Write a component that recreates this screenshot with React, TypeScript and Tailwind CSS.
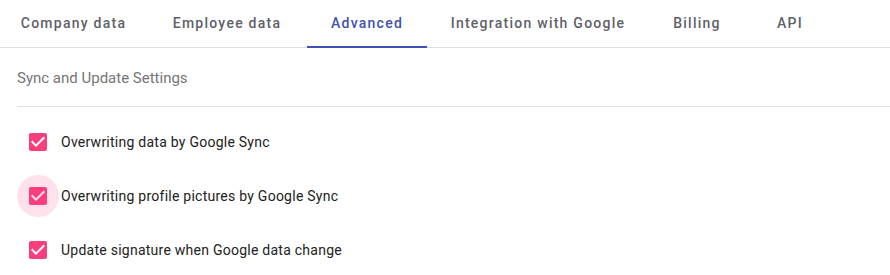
import React from 'react';

const tabs = [
  { label: 'Company data', w: 'w-[147px]' },
  { label: 'Employee data', w: 'w-[160px]' },
  { label: 'Advanced', w: 'w-[120px]', active: true },
  { label: 'Integration with Google', w: 'w-[222px]' },
  { label: 'Billing', w: 'w-[96px]' },
  { label: 'API', w: 'w-[90px]' },
];

const options = [
  { label: 'Overwriting data by Google Sync' },
  { label: 'Overwriting profile pictures by Google Sync', focused: true },
  { label: 'Update signature when Google data change' },
];

const CheckedBox: React.FC<{ focused?: boolean }> = ({ focused }) => (
  <span
    className={`flex h-[42px] w-[42px] shrink-0 items-center justify-center rounded-full ${
      focused ? 'bg-[#ffe1eb]' : ''
    }`}
  >
    <svg width="24" height="24" viewBox="0 0 24 24">
      <path
        fill="#fb3d7b"
        d="M19 3H5c-1.11 0-2 .9-2 2v14c0 1.1.89 2 2 2h14c1.11 0 2-.9 2-2V5c0-1.1-.89-2-2-2zm-9 14l-5-5 1.41-1.41L10 14.17l7.59-7.59L19 8l-9 9z"
      />
    </svg>
  </span>
);

const App: React.FC = () => {
  return (
    <div className="h-[275px] w-[890px] overflow-hidden bg-white font-['Roboto',sans-serif]">
      {/* Tabs */}
      <div className="flex h-[48px] border-b border-[#e0e0e0]">
        {tabs.map((tab) => (
          <div
            key={tab.label}
            className={`relative flex h-full items-center justify-center text-[14px] font-medium tracking-[1.25px] ${tab.w} ${
              tab.active ? 'text-[#3f51b5]' : 'text-[#5f5f69]'
            }`}
          >
            {tab.label}
            {tab.active && (
              <span className="absolute bottom-[-1px] left-0 h-[2px] w-full bg-[#3f51b5]" />
            )}
          </div>
        ))}
      </div>

      {/* Section */}
      <div className="pl-[17px]">
        <div className="flex h-[59px] items-center border-b border-[#e0e0e0] pt-[3px] text-[15px] text-[#757575]">
          Sync and Update Settings
        </div>
        <div className="flex flex-col gap-[12px] pt-[14px]">
          {options.map((opt) => (
            <label key={opt.label} className="flex items-center">
              <CheckedBox focused={opt.focused} />
              <span className="ml-[2px] text-[14px] tracking-[0.25px] text-[#212121]">
                {opt.label}
              </span>
            </label>
          ))}
        </div>
      </div>
    </div>
  );
};

export default App;
